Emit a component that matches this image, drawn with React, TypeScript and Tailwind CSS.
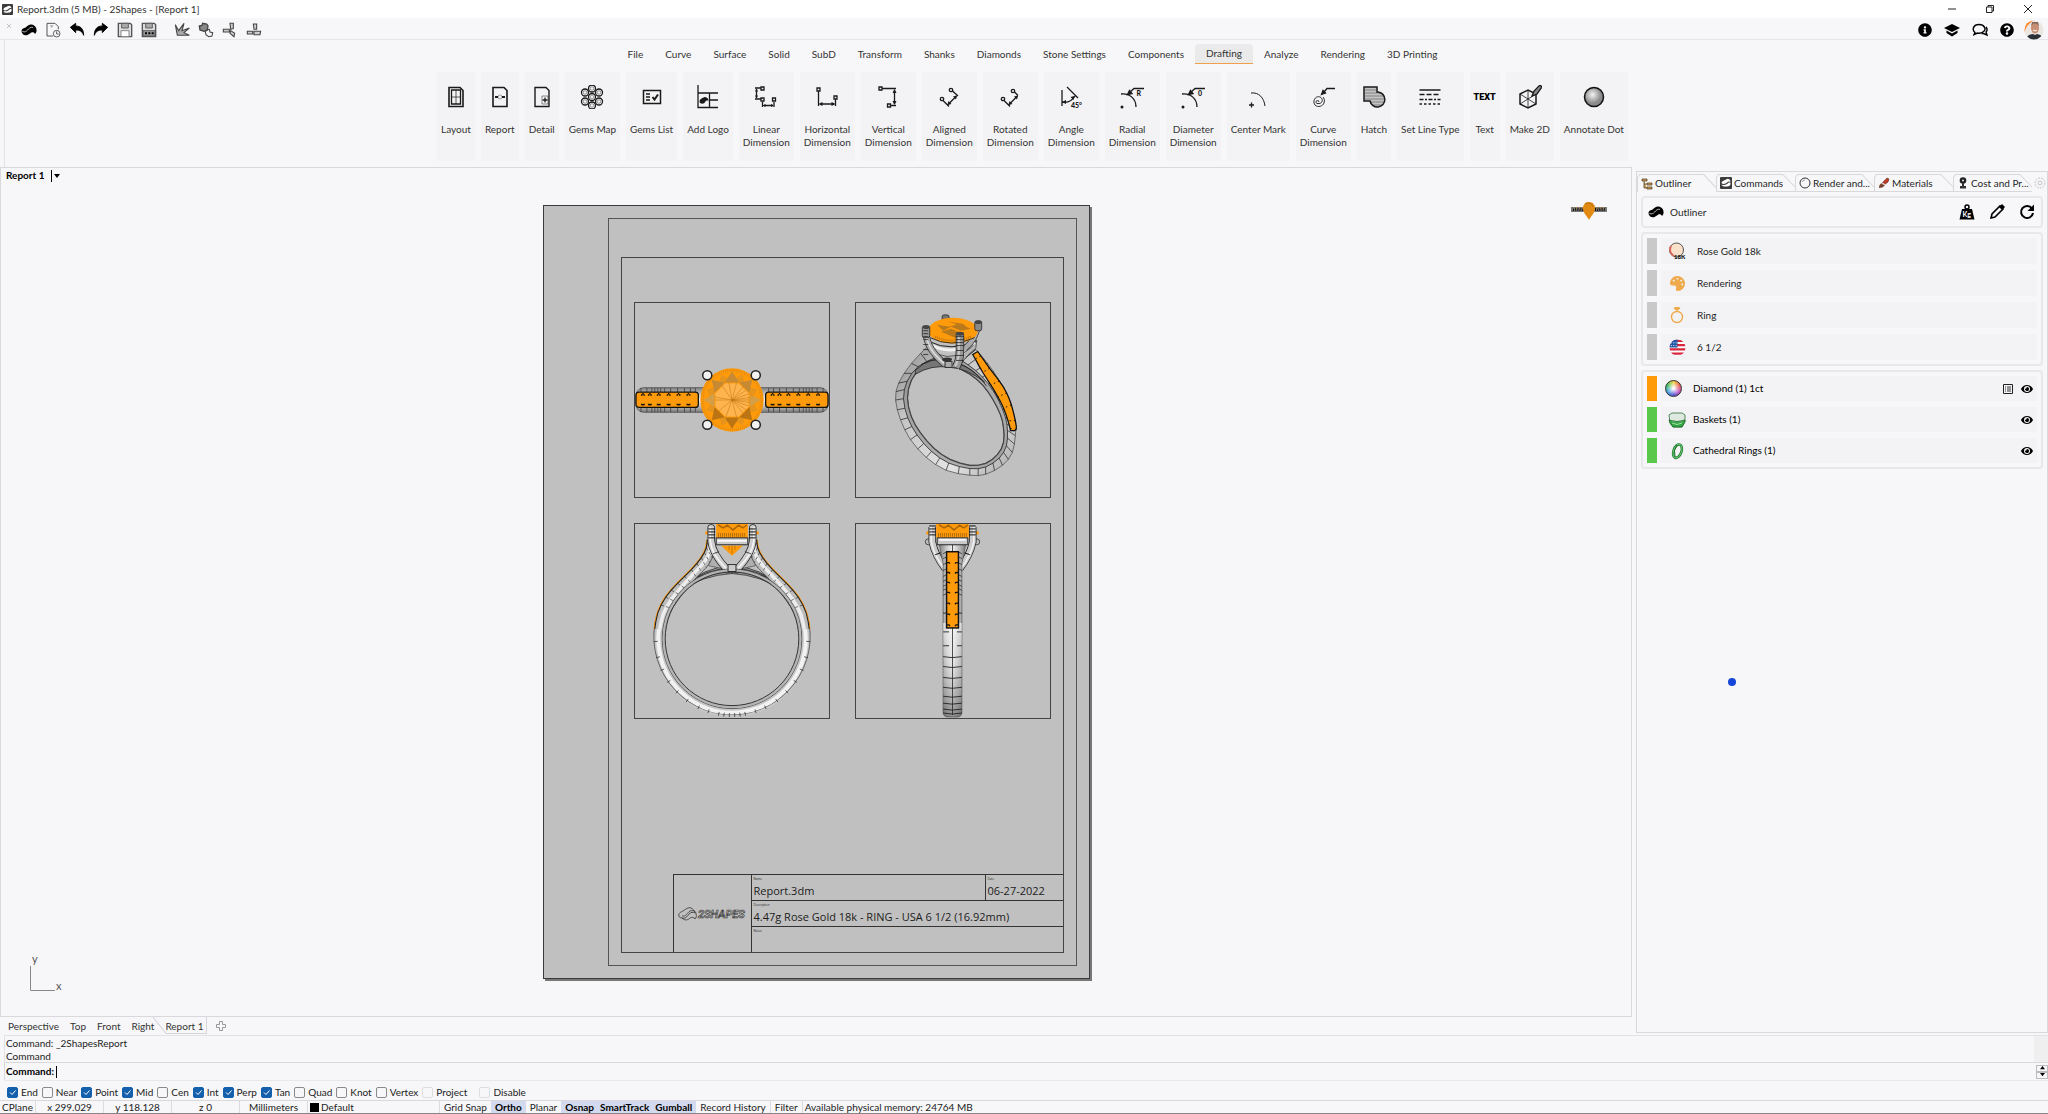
import { useState } from "react";
import type { ReactNode } from "react";
import { FaEye, FaInfoCircle, FaPalette, FaQuestionCircle } from "react-icons/fa";
import { clsx } from "clsx";

type Pt = [number, number];

const MENU_TABS = [
  "File",
  "Curve",
  "Surface",
  "Solid",
  "SubD",
  "Transform",
  "Shanks",
  "Diamonds",
  "Stone Settings",
  "Components",
  "Drafting",
  "Analyze",
  "Rendering",
  "3D Printing",
];

const OSNAPS = [
  { name: "End", on: true },
  { name: "Near", on: false },
  { name: "Point", on: true },
  { name: "Mid", on: true },
  { name: "Cen", on: false },
  { name: "Int", on: true },
  { name: "Perp", on: true },
  { name: "Tan", on: true },
  { name: "Quad", on: false },
  { name: "Knot", on: false },
  { name: "Vertex", on: false },
];

/* ---------- logos and small icons ---------- */

function Swoosh({ className = "", cut = "#f6f6f8" }: { className?: string; cut?: string }) {
  return (
    <svg viewBox="0 0 24 18" className={className} fill="currentColor">
      <path d="M1 12c-1-3 1-5 4-6 3-1 4-4 8-5 5-1 9 2 10 6-3-2-6-2-8 0-3 3-4 6-8 7-3 1-5 0-6-2z" />
      <path d="M23 7c1 3 0 6-2 8-1-3-4-3-6-2-3 2-5 4-8 4-3 0-5-2-6-5 3 2 6 1 8-1 3-3 4-6 8-6 3 0 5 0 6 2z" />
      <path d="M2 11c4 2 6 0 8-2s4-5 8-4" fill="none" stroke={cut} strokeWidth="1.1" />
    </svg>
  );
}

function AppBadge({ className = "" }: { className?: string }) {
  return (
    <svg viewBox="0 0 12 12" className={className}>
      <rect width="12" height="12" rx="1" fill="#3c3c3c" />
      <path d="M1.500 6C2 3.500 4 4 6 2.500S10 2 10.500 5C9 4 8 4.500 7 5.500S3 8 1.500 6zM10.500 6C11 9 8 9.500 5.500 9.500S2 9 1.500 7.500c2 1 4 .5 5.500-.5s2-2 3.500-1z" fill="#fff" />
    </svg>
  );
}

function Stroke({ children, className = "size-6" }: { children: ReactNode; className?: string }) {
  return (
    <svg viewBox="0 0 24 24" className={className} fill="none" stroke="#1a1a1a" strokeWidth="1.3">
      {children}
    </svg>
  );
}

const RIBBON: { label: string; icon: ReactNode }[] = [
  {
    label: "Layout",
    icon: (
      <Stroke>
        <path d="M5 2.500h11l3 3v16H5z" strokeWidth="1.600" />
        <path d="M7.500 5h9v14h-9z" />
        <path d="M12 5v14M7.500 12h9" strokeWidth=".7" />
      </Stroke>
    ),
  },
  {
    label: "Report",
    icon: (
      <Stroke>
        <path d="M5 2.500h11l3 3v16H5z" strokeWidth="1.600" />
        <path d="M7 12h3M14 12h3" strokeWidth="2" />
        <circle cx="12" cy="12" r="2" strokeWidth=".4" />
      </Stroke>
    ),
  },
  {
    label: "Detail",
    icon: (
      <Stroke>
        <path d="M5 2.500h11l3 3v16H5z" strokeWidth="1.400" />
        <path d="M12 11h6v8h-6z" strokeWidth=".5" />
        <path d="M12.500 15h5M15 12.500v5" />
      </Stroke>
    ),
  },
  {
    label: "Gems Map",
    icon: (
      <Stroke>
        {[
          [12, 3.5],
          [19, 7.5],
          [19, 16.5],
          [12, 20.5],
          [5, 16.5],
          [5, 7.5],
          [12, 12],
        ].map(([x, y], i) => (
          <g key={i}>
            <circle cx={x} cy={y} r="3.500" />
            <circle cx={x} cy={y} r="1.800" strokeWidth=".4" />
          </g>
        ))}
      </Stroke>
    ),
  },
  {
    label: "Gems List",
    icon: (
      <Stroke>
        <path d="M3.500 5.500h17v13h-17z" strokeWidth="1.500" />
        <path d="M6 9h4M6 12h4M6 15h4" />
        <path d="M12.500 12l2 2.500 3.500-5" strokeWidth="2" />
      </Stroke>
    ),
  },
  {
    label: "Add Logo",
    icon: (
      <Stroke>
        <path d="M2 0v22.500h20M2 8h20M13.500 8v14M13.500 15H22" />
        <path d="M3.500 17c0-3 3-4 5-5 2 0 4 1 4 4-2-1-3 0-4 2-2 1-4 1-5-1z" fill="#1a1a1a" stroke="none" />
      </Stroke>
    ),
  },
  {
    label: "Linear Dimension",
    icon: (
      <Stroke>
        <path d="M1 3h6M1 14h6M2.500 4v9M8.500 17v5M20 17v5M10 20.500h9" />
        <path d="M7 2h3v3H7zM7 13h3v3H7zM18.500 13h3v3h-3z" />
        <path d="M2.500 3.500L1 6.500h3zM2.500 13.500L1 10.500h3zM8.500 20.500l3-1.500v3zM20 20.500l-3-1.500v3z" fill="#1a1a1a" stroke="none" />
      </Stroke>
    ),
  },
  {
    label: "Horizontal Dimension",
    icon: (
      <Stroke>
        <path d="M3.500 6v15M20.500 14v7M5 19h14M2 3h3v3H2zM19 11h3v3h-3z" />
        <path d="M3.500 19l4-2v4zM20.500 19l-4-2v4z" fill="#1a1a1a" stroke="none" />
      </Stroke>
    ),
  },
  {
    label: "Vertical Dimension",
    icon: (
      <Stroke>
        <path d="M6 3.500h14M14 20.500h6M18.500 5v14M3 2h3v3H3zM11.500 19h3v3h-3z" />
        <path d="M18.500 4l-2 4h4zM18.500 20l-2-4h4z" fill="#1a1a1a" stroke="none" />
      </Stroke>
    ),
  },
  {
    label: "Aligned Dimension",
    icon: (
      <Stroke>
        <circle cx="14" cy="5" r="1.700" />
        <circle cx="5" cy="14" r="1.700" />
        <path d="M15.500 6l5.500 5M6 15.500l6 6M11 19.500l8.500-8.500" />
        <path d="M10.500 20l1-4 3 3zM20 10.500l-4 1 3 3z" fill="#1a1a1a" stroke="none" />
      </Stroke>
    ),
  },
  {
    label: "Rotated Dimension",
    icon: (
      <Stroke>
        <circle cx="15" cy="6" r="1.700" />
        <circle cx="5" cy="14" r="1.700" />
        <path d="M16.500 7l3.500 3.500M6 15.500l6 6M11 19.500l8.500-8.500" />
        <path d="M10.500 20l1-4 3 3zM20 10.500l-4 1 3 3z" fill="#1a1a1a" stroke="none" />
      </Stroke>
    ),
  },
  {
    label: "Angle Dimension",
    icon: (
      <Stroke>
        <path d="M3 5v16M8 2l11 11M3 17c5 1 10-1 13-6" />
        <path d="M3 17l4-2v4zM15.500 11l-4 1 3 3z" fill="#1a1a1a" stroke="none" />
        <text x="12" y="22.500" fontSize="7" fontWeight="900" fill="#1a1a1a" stroke="none">
          45°
        </text>
      </Stroke>
    ),
  },
  {
    label: "Radial Dimension",
    icon: (
      <Stroke>
        <path d="M1 9c9-1 15 5 15 13M9 8l5-4.500h10" />
        <path d="M7.500 9.500l2-4 2.500 3z" fill="#1a1a1a" />
        <circle cx="2" cy="22" r="1.500" fill="#1a1a1a" stroke="none" />
        <text x="16.500" y="11" fontSize="7" fontWeight="900" fill="#1a1a1a" stroke="none">
          R
        </text>
      </Stroke>
    ),
  },
  {
    label: "Diameter Dimension",
    icon: (
      <Stroke>
        <path d="M1 9c9-1 15 5 15 13M9 8l5-4.500h10" />
        <path d="M7.500 9.500l2-4 2.500 3z" fill="#1a1a1a" />
        <circle cx="2" cy="22" r="1.500" fill="#1a1a1a" stroke="none" />
        <text x="17" y="11" fontSize="7" fontWeight="900" fill="#1a1a1a" stroke="none">
          0
        </text>
      </Stroke>
    ),
  },
  {
    label: "Center Mark",
    icon: (
      <Stroke>
        <path d="M5 8c8-1 13 5 14 13" strokeWidth="1" />
        <path d="M3 20h5M5.500 17.500v5" />
      </Stroke>
    ),
  },
  {
    label: "Curve Dimension",
    icon: (
      <Stroke>
        <path d="M13 7l3-3.500h8" />
        <path d="M10.500 9.500l1.500-4 2.500 2.500z" fill="#1a1a1a" />
        <path
          d="M8 17a1.500 1.500 0 10-1 1.500c3 .5 5-2 4-4.500s-4-3-6-1.500-3 5-1 7.500c3 3 8 1 9-2s0-5-1-6"
          strokeWidth=".9"
        />
      </Stroke>
    ),
  },
  {
    label: "Hatch",
    icon: (
      <Stroke>
        <path d="M2 2h13v5h1a7.500 7.500 0 11-8 9H2z" fill="#c4c4c4" strokeWidth="1.500" />
        <path d="M3 5h11M3 8h16M3 11h19M3 14h20M9 17h13M10 20h11" strokeWidth=".4" />
      </Stroke>
    ),
  },
  {
    label: "Set Line Type",
    icon: (
      <Stroke>
        <path d="M1.500 5h21" strokeWidth="1.500" />
        <path d="M1.500 9.500h21" strokeDasharray="5 2" />
        <path d="M1.500 14.500h21" strokeDasharray="4 1.500 2 1.500" />
        <path d="M1.500 19h21" strokeDasharray="2.500 2" />
      </Stroke>
    ),
  },
  {
    label: "Text",
    icon: (
      <span className="flex h-6 items-center font-[Roboto,sans-serif] text-[9px] font-black text-black">TEXT</span>
    ),
  },
  {
    label: "Make 2D",
    icon: (
      <Stroke>
        <path d="M2 9l8-4 8 4v10l-8 4-8-4z" strokeWidth="1.500" />
        <path d="M10 5v18M2 9l16 10M18 9L2 19" strokeWidth=".8" />
        <path d="M14 11l2-5 6-6 2 2-5 7z" fill="#888" />
      </Stroke>
    ),
  },
  {
    label: "Annotate Dot",
    icon: (
      <svg viewBox="0 0 24 24" className="size-6">
        <defs>
          <radialGradient id="dot" cx=".42" cy=".38">
            <stop offset="0" stopColor="#f3f3f3" />
            <stop offset=".9" stopColor="#8b8b8b" />
          </radialGradient>
        </defs>
        <circle cx="12" cy="12" r="9.500" fill="url(#dot)" stroke="#111" strokeWidth="1.500" />
      </svg>
    ),
  },
];

const Doc = (
  <Stroke className="size-4">
    <path d="M3 2h12l5 5v4M3 2v19h9" stroke="#555" strokeWidth="1.500" />
    <path d="M7 5h6l-3 4z" fill="#aaa" stroke="none" />
    <circle cx="17.500" cy="17.500" r="5" stroke="#444" />
    <path d="M17.500 14v4h3" stroke="#444" />
  </Stroke>
);

const Undo = (
  <Stroke className="size-4">
    <path d="M2 8l8-6v4c8 0 12 5 12 14-2-6-6-8-12-8v4z" fill="#000" stroke="#000" />
  </Stroke>
);

const Redo = (
  <Stroke className="size-4">
    <path d="M22 8l-8-6v4C6 6 2 11 2 20c2-6 6-8 12-8v4z" fill="#000" stroke="#000" />
  </Stroke>
);

function Disk({ dots = false }: { dots?: boolean }) {
  return (
    <Stroke className="size-4">
      <path d="M2 2h18l2 2v18H2z" fill="#ddd" stroke="#555" strokeWidth="2" />
      <path d="M7 2h10v7H7z" fill="#aaa" stroke="#555" />
      {dots ? (
        <>
          <path d="M3 13h18v8H3z" fill="#999" stroke="#555" />
          <path d="M6 17h3M11 17h3M16 17h3" stroke="#000" strokeWidth="3" />
        </>
      ) : (
        <path d="M6 13h12v9H6z" fill="#fff" stroke="#777" />
      )}
    </Stroke>
  );
}

const TOOLS: { label: string; icon: ReactNode }[] = [
  { label: "2Shapes", icon: <Swoosh className="h-3 w-4 text-black" /> },
  { label: "New", icon: Doc },
  { label: "Undo", icon: Undo },
  { label: "Redo", icon: Redo },
  { label: "Save", icon: <Disk /> },
  { label: "Save as", icon: <Disk dots /> },
];

const EDIT_TOOLS: { label: string; icon: ReactNode }[] = [
  {
    label: "Sketch",
    icon: (
      <Stroke className="size-4">
        <path d="M2 4l5 9 8-11-3 11 11-4-8 7 8 4H5z" fill="#aaa" stroke="#444" strokeWidth="1.600" />
      </Stroke>
    ),
  },
  {
    label: "Group",
    icon: (
      <Stroke className="size-4">
        <path d="M2 6l4-1 1-3 6 1 2 3-1 6-5 2-6-2z" fill="#888" stroke="#444" strokeWidth="2" />
        <path d="M13 12l4-1 1 4 4 1-1 5-5 1-4-3-1-4z" stroke="#444" strokeWidth="1.600" />
      </Stroke>
    ),
  },
  {
    label: "Trim",
    icon: (
      <Stroke className="size-4">
        <path d="M12 2h5v8l-4 1zM2 11h9v4H2zM13 13l6 4-1 5-6-5z" fill="#ccc" stroke="#444" strokeWidth="1.600" />
      </Stroke>
    ),
  },
  {
    label: "Split",
    icon: (
      <Stroke className="size-4">
        <path d="M11 3h5v8h-4zM2 14h8v4H2zM12 14h10l-1 5h-9z" fill="#ccc" stroke="#444" strokeWidth="1.600" />
      </Stroke>
    ),
  },
];

/* ---------- ring drawings ---------- */

// Catmull-Rom sampling so outlines and their cross lines share the same points
function sample(pts: Pt[], steps = 5): Pt[] {
  const n = pts.length;
  const out: Pt[] = [];
  const at = (i: number) => pts[Math.max(0, Math.min(n - 1, i))];
  for (let i = 0; i < n - 1; i++) {
    const [a, b, c, d] = [at(i - 1), at(i), at(i + 1), at(i + 2)];
    for (let s = 0; s < steps; s++) {
      const t = s / steps;
      const f = (k: 0 | 1) =>
        0.5 *
        (2 * b[k] +
          (c[k] - a[k]) * t +
          (2 * a[k] - 5 * b[k] + 4 * c[k] - d[k]) * t * t +
          (3 * b[k] - a[k] - 3 * c[k] + d[k]) * t * t * t);
      out.push([f(0), f(1)]);
    }
  }
  out.push(pts[n - 1]);
  return out;
}

const toPath = (pts: Pt[], closed = false) => "M" + pts.map((p) => p.map((v) => v.toFixed(1)).join(" ")).join("L") + (closed ? "Z" : "");

const polar = (cx: number, cy: number, r: number, deg: number): Pt => [
  cx + r * Math.cos((deg * Math.PI) / 180),
  cy + r * Math.sin((deg * Math.PI) / 180),
];

const ORANGE = "#ff9a0a";

function Metal({ id, vertical = false }: { id: string; vertical?: boolean }) {
  return (
    <linearGradient id={id} x2={vertical ? "0" : "1"} y2={vertical ? "1" : "0"}>
      <stop offset="0" stopColor="#808080" />
      <stop offset=".3" stopColor="#cfcfcf" />
      <stop offset=".5" stopColor="#f2f2f2" />
      <stop offset=".75" stopColor="#bdbdbd" />
      <stop offset="1" stopColor="#777" />
    </linearGradient>
  );
}

function TopView() {
  const lines = [6, 12, 17, 20, 23, 26, 30, 36, 43, 50, 56, 61];
  return (
    <svg viewBox="0 0 196 196" className="block w-full">
      <defs>
        <Metal id="topMetal" vertical />
      </defs>
      <rect x="1" y="85.500" width="194" height="25" rx="8" fill="url(#topMetal)" stroke="#444" strokeWidth=".7" />
      {lines.map((x) => (
        <path key={x} d={`M${x} 86v24M${196 - x} 86v24`} stroke="#222" strokeWidth=".6" />
      ))}
      {[1, 132].map((x) => (
        <g key={x}>
          <rect x={x} y="90" width="63" height="15.500" rx="3" fill={ORANGE} stroke="#111" strokeWidth="1.300" />
          {[5, 12, 21, 31, 41, 51].map((d) => (
            <path
              key={d}
              d={`M${x + d} 93h4M${x + d + 2} 91v2M${x + d} 102.500h4M${x + d + 2} 102v2`}
              stroke="#111"
              strokeWidth="1.400"
              strokeDasharray="1.500 1"
            />
          ))}
        </g>
      ))}
      <circle cx="98" cy="98" r="32" fill={ORANGE} />
      <circle cx="98" cy="98" r="30" fill="none" stroke="#d98512" strokeWidth="3" strokeDasharray=".6 1.400" />
      {Array.from({ length: 8 }, (_, i) => i * 45).map((a) => (
        <g key={a}>
          <path
            d={toPath([polar(98, 98, 28, a + 22), polar(98, 98, 20, a + 2), polar(98, 98, 20, a + 42)], true)}
            fill="#e6941c"
          />
          <path
            d={toPath([polar(98, 98, 29, a), polar(98, 98, 19, a - 22), polar(98, 98, 19, a + 22)], true)}
            fill={a > 30 && a < 150 ? "#b06f14" : a % 180 ? "#bd873a" : "#d0a050"}
            opacity=".85"
          />
        </g>
      ))}
      <path d={toPath(Array.from({ length: 8 }, (_, i) => polar(98, 98, 18, i * 45 + 22)), true)} fill="#ffb44e" />
      {[-170, -125, -100, -75, -50, -35, -20, -8, 0, 8, 20, 35, 50, 75, 110, 140, 180].map((a) => (
        <path key={a} d={toPath([[98, 98], polar(98, 98, 18, a)])} stroke="#b9720f" strokeWidth=".5" />
      ))}
      {[
        [73, 73],
        [122, 73],
        [73, 123],
        [122, 123],
      ].map(([x, y], i) => (
        <circle key={i} cx={x} cy={y} r="4.600" fill="#f2f2f2" stroke="#222" strokeWidth="1.500" />
      ))}
    </svg>
  );
}

const OUTER: Pt[] = [
  [73, 43], [56, 61], [43, 81], [40, 98], [45, 118], [55, 138], [71, 156], [91, 169], [115, 174],
  [131, 173], [148, 164], [158, 151], [161, 134], [161, 121], [156, 101], [145, 79], [133, 61], [121, 47],
];

const INNER: Pt[] = [
  [82, 62], [66, 66], [56, 78], [52, 96], [56, 115], [65, 131], [79, 147], [95, 158], [115, 164],
  [131, 162], [143, 153], [149, 141], [149, 126], [146, 113], [138, 97], [128, 83], [115, 72], [100, 64],
];

const STRIP: Pt[][] = [
  [[123, 49], [135, 66], [149, 85], [157, 103], [162, 125], [160, 129]],
  [[118, 52], [128, 70], [140, 89], [149, 106], [155, 124], [156, 129]],
];

function PerspectiveView() {
  const outer = sample(OUTER, 2);
  const inner = sample(INNER, 2);
  const mid = outer.map((p, i): Pt => [(p[0] + 2 * inner[i][0]) / 3, (p[1] + 2 * inner[i][1]) / 3]);
  const a = sample(STRIP[0], 3);
  const b = sample(STRIP[1], 3);
  return (
    <svg viewBox="0 0 196 196" className="block w-full">
      <defs>
        <linearGradient id="perspMetal" x2="1" y2="1">
          <stop offset="0" stopColor="#8a8a8a" />
          <stop offset=".3" stopColor="#c4c4c4" />
          <stop offset=".7" stopColor="#e4e4e4" />
          <stop offset="1" stopColor="#a4a4a4" />
        </linearGradient>
      </defs>
      <path d={toPath([...outer, ...[...inner].reverse()], true)} fill="url(#perspMetal)" stroke="#555" strokeWidth=".8" />
      <path d={toPath([...mid, ...[...inner].reverse()], true)} fill="#8c8c8c" opacity=".6" />
      <path d={toPath(mid)} fill="none" stroke="#333" strokeWidth=".9" />
      <path d={toPath(inner)} fill="none" stroke="#444" strokeWidth="1.200" />
      {outer.map((p, i) => (
        <path key={i} d={toPath([p, mid[i]])} stroke="#1c1c1c" strokeWidth=".7" />
      ))}
      {/* gallery under the setting */}
      <path d="M60 68Q76 52 95 60Q112 60 130 80Q112 66 95 65Q76 62 60 72Z" fill="#777" stroke="#222" strokeWidth=".8" />
      <path d="M66 62Q82 54 92 57M100 60Q118 64 132 84" fill="none" stroke="#222" strokeWidth=".8" />
      <path d={toPath([...a, ...[...b].reverse()], true)} fill={ORANGE} stroke="#111" strokeWidth="1.300" />
      {a.map((p, i) => (i % 2 ? <path key={i} d={toPath([p, b[i]])} stroke="#111" strokeWidth="1" strokeDasharray="1.500 3" /> : null))}
      {/* basket */}
      <path d="M73 38Q76 52 92 54Q112 54 122 38L121 46Q112 52 104 65H90Q80 52 73 48Z" fill="#b5b5b5" stroke="#333" strokeWidth=".7" />
      <path d="M75 42Q96 54 120 40" stroke="#f1f1f1" strokeWidth="3" fill="none" />
      <path d="M74 39Q96 50 122 38" stroke="#222" strokeWidth="1" fill="none" />
      <path d="M71 30Q71 46 90 62" stroke="#333" strokeWidth="7" fill="none" />
      <path d="M71 30Q71 46 90 62" stroke="#a9a9a9" strokeWidth="5.500" fill="none" />
      <path d="M71 30Q71 46 89 61" stroke="#dedede" strokeWidth="1.500" fill="none" />
      <path d="M123 22Q122 36 110 46" stroke="#333" strokeWidth="6" fill="none" />
      <path d="M123 22Q122 36 110 46" stroke="#aaa" strokeWidth="4.500" fill="none" />
      <rect x="87" y="12" width="7" height="7" rx="2" fill="#777" stroke="#222" strokeWidth=".8" />
      <ellipse cx="98" cy="28" rx="25" ry="13" fill={ORANGE} />
      <path d="M82 22l12 2 10-3 12 5-10 2-10-4-8 4zM86 29l10-3 12 5-8 4zM94 19l14 2 6 5" fill="#a36f22" opacity=".75" />
      <path d="M80 34Q96 42 116 34" stroke="#b9720f" strokeWidth="2" strokeDasharray="1 1" fill="none" />
      <path d="M75 35Q96 46 120 35" stroke="#222" strokeWidth=".9" fill="none" />
      <rect x="67" y="23" width="7.500" height="12" rx="2" fill="#999" stroke="#222" strokeWidth=".8" />
      <ellipse cx="71" cy="24.500" rx="3.500" ry="1.800" fill="#444" />
      <rect x="120" y="18" width="7" height="10" rx="2" fill="#888" stroke="#222" strokeWidth=".8" />
      <ellipse cx="123.500" cy="19.500" rx="3.500" ry="1.800" fill="#444" />
      <path d="M105 32V48Q105 58 101 65" stroke="#222" strokeWidth="8.500" fill="none" />
      <path d="M105 32V48Q105 58 101 65" stroke="#999" strokeWidth="7" fill="none" />
      <path d="M104 34V48Q104 58 100 64" stroke="#ccc" strokeWidth="2" fill="none" />
      {[34, 37, 40, 43, 48, 53, 58].map((y) => (
        <path key={y} d={`M101 ${y}h8M68 ${y - 6}h5`} stroke="#222" strokeWidth=".8" />
      ))}
      <ellipse cx="105" cy="31" rx="4.300" ry="2" fill="#444" />
      <ellipse cx="92" cy="57" rx="5" ry="2" fill="#333" />
      <rect x="90" y="59" width="7" height="6" fill="#aaa" stroke="#222" strokeWidth=".8" />
    </svg>
  );
}

const SHOULDER_OUT: Pt[] = [[20, 106], [23, 90], [31, 74], [43, 60], [57, 46], [67, 34], [72, 24], [73, 16]];
const SHOULDER_IN: Pt[] = [[30, 106], [34, 92], [42, 79], [52, 66], [62, 54], [72, 44], [78, 34], [80, 22]];

function FrontView() {
  const out = sample(SHOULDER_OUT, 2);
  const inn = sample(SHOULDER_IN, 2);
  const core = out.map((p, i): Pt => [(p[0] + inn[i][0]) / 2, (p[1] + inn[i][1]) / 2]);
  const ticks = [-8, 2, 14, 24, 34, 44, 54, 64, 72, 80, 84, 88, 92, 96, 100, 108, 116, 126, 136, 146, 156, 166, 178, 188];
  const half = (
    <>
      <path d="M48 64Q68 44 98 42V50Q68 52 45 68Z" fill="#999" stroke="#222" strokeWidth=".7" />
      <path d="M52 60Q70 46 98 44.500M54 58Q72 48 98 47" fill="none" stroke="#222" strokeWidth=".8" />
      <path d="M80 30L92 46 74 42Z" fill="#b0b0b0" stroke="#333" strokeWidth=".6" />
      <path d={toPath(out)} stroke={ORANGE} strokeWidth="2.500" fill="none" />
      <path d={toPath([...out, ...[...inn].reverse()], true)} fill="#bdbdbd" />
      <path d={toPath(core)} stroke="#ededed" strokeWidth="3.500" fill="none" />
      <path d={toPath(inn)} stroke="#444" strokeWidth=".7" fill="none" />
      <path d={toPath(out)} stroke="#222" strokeWidth="1.100" fill="none" />
      {out.map((p, i) =>
        i > 2 ? <path key={i} d={toPath([p, inn[i]])} stroke="#222" strokeWidth=".6" strokeDasharray="3 2" /> : null
      )}
      <path d="M71 9h6" stroke={ORANGE} strokeWidth="3" />
      <path d="M77 4V17Q78 30 93 46" stroke="#222" strokeWidth="7.500" fill="none" strokeLinecap="round" />
      <path d="M77 4V17Q78 30 93 46" stroke="#cfcfcf" strokeWidth="6" fill="none" strokeLinecap="round" />
      <path d="M76 3V17Q77 30 92 45" stroke="#f4f4f4" strokeWidth="1.500" fill="none" />
      <path d="M74 5h7M74 8h7M74 11h7M74 14h7" stroke="#111" strokeWidth="1" />
      <path d="M79 30l6-2" stroke="#222" strokeWidth=".8" />
    </>
  );
  return (
    <svg viewBox="0 0 196 196" className="block w-full">
      <circle cx="98" cy="116" r="74" fill="none" stroke="#c6c6c6" strokeWidth="10" strokeDasharray="240 225" transform="rotate(-3 98 116)" />
      <path d="M22 92A79 79 0 1 0 174 92" fill="none" stroke="#555" strokeWidth=".9" />
      <circle cx="98" cy="116" r="74.500" fill="none" stroke="#f2f2f2" strokeWidth="4" strokeDasharray="255 213" transform="rotate(-8 98 116)" />
      {ticks.map((t) => (
        <path key={t} d={toPath([polar(98, 116, 75, t), polar(98, 116, 79, t)])} stroke="#222" strokeWidth=".7" />
      ))}
      {half}
      <g transform="matrix(-1 0 0 1 196 0)">{half}</g>
      <circle cx="98" cy="116" r="70.500" fill="none" stroke="#444" strokeWidth=".8" />
      <circle cx="98" cy="116" r="69" fill="none" stroke="#b4b4b4" strokeWidth="2" />
      <circle cx="98" cy="116" r="67.500" fill="none" stroke="#333" strokeWidth="1" />
      <rect x="94" y="41" width="8" height="7" fill="#ccc" stroke="#222" strokeWidth=".9" />
      <path d="M82 0h32v14H82z" fill={ORANGE} />
      <path d="M84 1l5 3 5-3M93 1l6 5 6-5M104 1l5 3 4-3" fill="none" stroke="#a8660a" strokeWidth="1.500" />
      <path d="M84 11h28" stroke="#a8660a" strokeWidth="4" strokeDasharray=".8 1.200" />
      <path d="M82 14h32v7H82z" fill="#c9c9c9" stroke="#222" strokeWidth="1" />
      <path d="M83 17h30" stroke="#f8f8f8" strokeWidth="2" />
      <path d="M87 22h22L98 32z" fill={ORANGE} />
      <path d="M98 22v8M95 22v4M101 22v4" stroke="#a8660a" strokeWidth=".7" />
    </svg>
  );
}

function SideView() {
  const rungs = [90, 109, 123, 134, 144, 155, 165, 174, 181, 187, 191];
  const half = (
    <>
      <circle cx="73" cy="18" r="3" fill="#bbb" stroke="#333" strokeWidth=".8" />
      <path d="M71 9h6" stroke={ORANGE} strokeWidth="3" />
      <path d="M77 3V18Q80 32 90 45" stroke="#222" strokeWidth="7.500" fill="none" />
      <path d="M77 3V18Q80 32 90 45" stroke="#ccc" strokeWidth="6" fill="none" />
      <path d="M76 3V18Q79 32 89 45" stroke="#f2f2f2" strokeWidth="1.500" fill="none" />
      <path d="M74 2h7M74 5h7M74 8h7M74 11h7M80 31l6-2" stroke="#111" strokeWidth="1" />
    </>
  );
  return (
    <svg viewBox="0 0 196 196" className="block w-full">
      <defs>
        <Metal id="sideMetal" />
        <linearGradient id="sideShade" x2="0" y2="1">
          <stop offset="0" stopColor="#fff" stopOpacity=".6" />
          <stop offset=".4" stopColor="#ddd" stopOpacity=".3" />
          <stop offset="1" stopColor="#333" stopOpacity=".5" />
        </linearGradient>
      </defs>
      {half}
      <g transform="matrix(-1 0 0 1 195 0)">{half}</g>
      <path d="M84 20h27L107 40V190Q107 195 102 195H93Q88 195 88 190V40Z" fill="url(#sideMetal)" stroke="#555" strokeWidth=".7" />
      <path d="M88 100h19v90q0 5-5 5h-9q-5 0-5-5z" fill="url(#sideShade)" />
      {rungs.map((y, i) => (
        <path key={y} d={i < 3 ? `M88 ${y}h6M102 ${y}h5` : `M88 ${y}q9 2 19 0`} stroke="#222" strokeWidth=".9" fill="none" />
      ))}
      {[30, 35, 41, 47, 53, 58, 63, 67, 72].map((y) => (
        <path key={y} d={`M88 ${y}l4-2M107 ${y}l-4-2`} stroke="#222" strokeWidth=".7" />
      ))}
      <path d="M97.500 18v175" stroke="#222" strokeWidth=".8" />
      <rect x="91.500" y="28" width="12" height="77" fill={ORANGE} stroke="#111" strokeWidth="1.500" />
      {[39, 49, 59, 69, 80, 91, 102].map((y) => (
        <path key={y} d={`M92 ${y}h2l1 1M103 ${y}h-2l-1 1`} stroke="#111" strokeWidth="1.300" fill="none" />
      ))}
      <path d="M81 0h33v14H81z" fill={ORANGE} />
      <path d="M84 1l5 3 5-3M93 1l6 5 6-5M104 1l5 3 4-3" fill="none" stroke="#a8660a" strokeWidth="1.500" />
      <path d="M83 11h29" stroke="#a8660a" strokeWidth="4" strokeDasharray=".8 1.200" />
      <path d="M82 14h31v7H82z" fill="#c9c9c9" stroke="#222" strokeWidth="1" />
      <path d="M84 16h27" stroke="#f8f8f8" strokeWidth="2" />
    </svg>
  );
}

function SheetLogo() {
  return (
    <svg viewBox="0 0 68 14" className="w-[68px]" fill="none" stroke="#333" strokeWidth=".8">
      <path d="M1 9c-1-3 2-4 4-5 3-2 5-4 8-3 2 1 4 3 4 5-2-1-4-1-6 1-2 3-4 5-7 4-2 0-3-1-3-2z" />
      <path d="M4 9c4 1 5-3 8-5 3-1 6 0 6 3 1 2 0 4-1 5-1-2-3-2-5-1-2 2-5 3-8 0" />
      <text x="20" y="11" fontSize="11" fontWeight="600" fontStyle="italic" fontFamily="Roboto, sans-serif" strokeWidth=".6">
        2SHAPES
      </text>
    </svg>
  );
}

/* ---------- layout sheet ---------- */

function TitleField({ caption, value, className = "" }: { caption: string; value?: string; className?: string }) {
  return (
    <div className={clsx("px-0.5 text-[#1c1c1c]", className)}>
      <div className="pt-0.5 text-[3px] leading-[5px]">{caption}</div>
      <div className="h-[18px] text-[11px] leading-[18px] whitespace-nowrap">{value}</div>
    </div>
  );
}

function Sheet() {
  return (
    <div className="w-[547px] border border-[#3a3a3a] bg-[#c0c0c0] pt-3 pr-3 pb-3 pl-16 font-['Open_Sans',sans-serif] shadow-[2px_2px_0_#777]">
      <div className="border border-[#555] px-3 pt-[38px] pb-3">
        <div className="border border-[#444] pt-11 pl-3">
          <div className="grid grid-cols-2 gap-[25px] pr-3">
            {[TopView, PerspectiveView, FrontView, SideView].map((View, i) => (
              <div key={i} className="border border-[#444]">
                <View />
              </div>
            ))}
          </div>
          <div className="mt-[155px] ml-[39px] flex border-t border-l border-[#333]">
            <div className="flex w-[78px] items-center justify-center border-r border-[#333]">
              <SheetLogo />
            </div>
            <div className="flex-1">
              <div className="flex">
                <TitleField caption="Name" value="Report.3dm" className="flex-1 border-b border-[#333]" />
                <TitleField caption="Date" value="06-27-2022" className="w-[78px] border-b border-l border-[#333]" />
              </div>
              <TitleField
                caption="Description"
                value="4.47g Rose Gold 18k - RING - USA 6 1/2 (16.92mm)"
                className="border-b border-[#333]"
              />
              <TitleField caption="Notes" />
            </div>
          </div>
        </div>
      </div>
    </div>
  );
}

function Viewport() {
  return (
    <main className="relative flex flex-1 flex-col border border-[#d9d9dc]">
      <div className="absolute top-0 left-0 flex h-[15px] items-center gap-1 pl-[5px]">
        <span className="text-[10px] font-bold text-black">Report 1</span>
        <button aria-label="Viewport menu" className="ml-0.5 flex h-3 items-center border-l border-black pl-0.5">
          <svg viewBox="0 0 6 4" className="w-1.5">
            <path d="M0 0h6L3 4z" />
          </svg>
        </button>
      </div>
      <div className="flex flex-1 items-center justify-center">
        <Sheet />
      </div>
      <svg viewBox="0 0 36 22" className="absolute top-8 right-6 w-9">
        <path d="M0 7h36v5H0z" fill="#777" />
        <path d="M2 9.500h32" stroke="#111" strokeWidth="3" strokeDasharray="1 1.200" />
        <path d="M2 8h32" stroke="#d88a20" strokeWidth="1" strokeDasharray="1 2" />
        <path d="M18 2c4 0 6 3 6 6 0 5-4 8-6 12-2-4-6-7-6-12 0-3 2-6 6-6z" fill="#e08a14" />
        <path d="M14 4c2-2 7-1 8 3" stroke="#b76a08" fill="none" />
      </svg>
      <svg viewBox="0 0 40 46" className="absolute bottom-[22px] left-6 w-10 text-[11px]" fill="#555">
        <path d="M5.500 18v24.500H30" stroke="#888" fill="none" />
        <text x="7" y="15">
          y
        </text>
        <text x="31" y="42">
          x
        </text>
      </svg>
    </main>
  );
}

/* ---------- right panel ---------- */

const PANEL_TABS: { label: string; icon: ReactNode }[] = [
  {
    label: "Outliner",
    icon: (
      <svg viewBox="0 0 12 12" className="size-3" fill="#c8a060" stroke="#5b4520" strokeWidth=".8">
        <path d="M1 1h5v2H1zM6 5h5v2H6zM6 9h5v2H6zM3 3v7h3M3 6h3" />
      </svg>
    ),
  },
  { label: "Commands", icon: <AppBadge className="size-3" /> },
  {
    label: "Render and...",
    icon: (
      <svg viewBox="0 0 12 12" className="size-3" fill="none" stroke="#333">
        <circle cx="6" cy="6" r="5" />
        <path d="M3 5q1-2 3-2" stroke="#999" />
      </svg>
    ),
  },
  {
    label: "Materials",
    icon: (
      <svg viewBox="0 0 12 12" className="size-3">
        <path d="M1 11c0-3 1-4 3-5l3 2c-1 2-3 3-6 3z" fill="#7a4630" />
        <path d="M4 6l5-5 2 1-1 3-4 3z" fill="#c43c28" stroke="#5a2a20" strokeWidth=".6" />
        <path d="M4 6l3 2" stroke="#ddd" strokeWidth="1.500" />
      </svg>
    ),
  },
  {
    label: "Cost and Pr...",
    icon: (
      <svg viewBox="0 0 12 12" className="size-3">
        <circle cx="6" cy="3.500" r="3.300" fill="#222" />
        <circle cx="6" cy="3.500" r="1" fill="#ddd" />
        <path d="M5 6h2v3h2v2.500H3V9h2z" fill="#333" />
      </svg>
    ),
  },
];

const RoseGold = (
  <svg viewBox="0 0 18 18" className="size-[18px]">
    <circle cx="8.500" cy="8" r="7" fill="#f9e0c8" stroke="#555" />
    <path d="M3 4q-3 6 3 10" stroke="#d86a60" strokeWidth="2" fill="none" />
    <text x="6" y="16.500" fontSize="6" fontWeight="800" fill="#222">
      18K
    </text>
  </svg>
);

const RingIcon = (
  <svg viewBox="0 0 18 18" className="size-[18px]" fill="none" stroke="#efaa4c" strokeWidth="1.400">
    <circle cx="9" cy="11" r="5.500" />
    <path d="M7 1h4l1.500 1.500L9 5 5.500 2.500z" fill="#efaa4c" stroke="none" />
  </svg>
);

const Flag = (
  <svg viewBox="0 0 18 18" className="size-[17px]">
    <clipPath id="flagClip">
      <circle cx="9" cy="9" r="8.500" />
    </clipPath>
    <g clipPath="url(#flagClip)">
      <path d="M0 0h18v18H0z" fill="#fff" />
      <path d="M0 2h18M0 6.500h18M0 11h18M0 15.500h18" stroke="#d9263c" strokeWidth="2.200" />
      <path d="M0 0h9v9H0z" fill="#2457a8" />
      <path d="M2 4h6M2 7h6" stroke="#fff" strokeDasharray="1 1.500" />
    </g>
  </svg>
);

const PROPERTIES = [
  { label: "Rose Gold 18k", icon: RoseGold },
  { label: "Rendering", icon: <FaPalette className="size-[15px] -scale-x-100 text-[#efaa4c]" /> },
  { label: "Ring", icon: RingIcon },
  { label: "6 1/2", icon: Flag },
];

const GemBall = (
  <span className="mr-2 size-[17px] rounded-full border border-[#333] bg-[radial-gradient(circle,#fff_5%,transparent_65%),conic-gradient(#e8d040,#e86050,#c050c0,#5050d0,#40a0e0,#40c060,#e8d040)]" />
);

const Basket = (
  <svg viewBox="0 0 18 18" className="size-[18px]" stroke="#155c20" strokeWidth=".7">
    <path d="M1 4l3-2h10l3 2v6l-3 6H5L2 12z" fill="#dfe9e0" />
    <path d="M1 9q8 3 16 0v2l-3 5H5L2 12z" fill="#35a845" />
    <path d="M4 12q5 3 10 0" stroke="#c9f0cc" fill="none" />
  </svg>
);

const Cathedral = (
  <svg viewBox="0 0 18 18" className="size-[18px]" fill="none">
    <ellipse cx="9.500" cy="9" rx="4" ry="7" transform="rotate(20 9 9)" stroke="#1c6e28" strokeWidth="2.500" />
    <ellipse cx="9.500" cy="9" rx="4" ry="7" transform="rotate(20 9 9)" stroke="#5cc46a" strokeWidth="1.200" />
    <path d="M9 3q-4 5-2 12" stroke="#1c6e28" />
  </svg>
);

const OBJECTS = [
  { label: "Diamond (1) 1ct", icon: GemBall, color: "bg-[#ff9a0a]", list: true },
  { label: "Baskets (1)", icon: Basket, color: "bg-[#5ac84b]", list: false },
  { label: "Cathedral Rings (1)", icon: Cathedral, color: "bg-[#5ac84b]", list: false },
];

function Card({ children, className = "" }: { children: ReactNode; className?: string }) {
  return <section className={clsx("rounded border-2 border-[#e8e8eb] bg-[#f7f7f9]", className)}>{children}</section>;
}

function SidePanel() {
  const [active, setActive] = useState("Outliner");
  return (
    <aside className="relative mt-1 -mb-4 w-[412px] shrink-0 border border-[#d9d9dc] text-[#1f1f1f]">
      <div className="flex h-5 items-stretch pt-0.5 text-[10px]">
        {PANEL_TABS.map((tab) => (
          <button
            key={tab.label}
            onClick={() => setActive(tab.label)}
            className={clsx(
              "relative flex min-w-0 flex-1 items-center gap-0.5 pt-px pl-1 text-left whitespace-nowrap",
              active !== tab.label && "border-b border-[#d9d9dc]"
            )}
          >
            <svg viewBox="0 0 78 17" preserveAspectRatio="none" className="absolute inset-0 size-full" fill="none" stroke="#d9d9dc">
              <path d="M.5 17V3.500l2-3H66L78 13" />
            </svg>
            {tab.icon}
            <span>{tab.label}</span>
          </button>
        ))}
        <button aria-label="Panel options" className="flex w-[15px] items-center justify-center">
          <svg viewBox="0 0 12 12" className="size-3" fill="none" stroke="#c4c4c8">
            <circle cx="6" cy="6" r="5" strokeDasharray="2 1" />
            <circle cx="6" cy="6" r="2" />
          </svg>
        </button>
      </div>

      <div className="flex flex-col gap-1 px-1 pt-1 text-[10px]">
        <Card className="flex h-8 items-center pr-1.5 pl-1">
          <Swoosh className="h-3 w-[18px] text-black" />
          <h2 className="ml-[5px] flex-1">Outliner</h2>
          <div className="flex items-center gap-3.5 text-black">
            <button aria-label="Weight">
              <svg viewBox="0 0 16 16" className="size-4">
                <circle cx="8" cy="3" r="2" fill="none" stroke="#000" strokeWidth="1.500" />
                <path d="M3 5h10l2.500 10.500H.5z" />
                <text x="3.500" y="13" fontSize="7" fontWeight="700" fill="#fff">
                  Kg
                </text>
              </svg>
            </button>
            <button aria-label="Edit">
              <svg viewBox="0 0 16 16" className="size-4">
                <path d="M2 14l1-4 8-8 3 3-8 8z" fill="none" stroke="#000" strokeWidth="1.600" />
                <path d="M10 3l3-3 3 3-3 3z" />
              </svg>
            </button>
            <button aria-label="Refresh">
              <svg viewBox="0 0 16 16" className="size-4" fill="none" stroke="#000" strokeWidth="2">
                <path d="M13 4.500A6 6 0 1014 9" />
                <path d="M15 .5V7H8.500z" fill="#000" stroke="none" />
              </svg>
            </button>
          </div>
        </Card>

        <Card className="flex flex-col gap-1.5 p-1">
          {PROPERTIES.map((row) => (
            <div key={row.label} className="flex h-[26px] items-center gap-1">
              <span className="h-full w-2.5 bg-[#c9c9c9]" />
              <div className="flex h-full flex-1 items-center bg-[#f3f3f5]">
                <span className="flex w-8 justify-center">{row.icon}</span>
                <span className="ml-1">{row.label}</span>
              </div>
            </div>
          ))}
        </Card>

        <Card className="flex flex-col gap-1.5 p-1">
          {OBJECTS.map((row) => (
            <div key={row.label} className="flex h-[25px] items-center gap-1">
              <span className={clsx("h-full w-2.5", row.color)} />
              <div className="flex h-full flex-1 items-center bg-[#f3f3f5] pr-1 text-black">
                <span className="flex w-8 justify-center">{row.icon}</span>
                <span className="flex-1">{row.label}</span>
                {row.list && (
                  <button aria-label="Gem list" className="mr-2">
                    <svg viewBox="0 0 10 10" className="size-2.5" fill="none" stroke="#222">
                      <path d="M.5.5h9v9h-9z" />
                      <path d="M2 3h1M4 3h4M2 5h1M4 5h4M2 7h1M4 7h4" strokeWidth=".9" />
                    </svg>
                  </button>
                )}
                <button aria-label={`Toggle ${row.label}`}>
                  <FaEye className="size-3" />
                </button>
              </div>
            </div>
          ))}
        </Card>
      </div>
      <span className="absolute top-[506px] left-[91px] size-2 rounded-full bg-[#1546d8]" />
    </aside>
  );
}

/* ---------- bottom bars ---------- */

function ViewTabs() {
  return (
    <nav className="mr-[416px] flex h-[18px] items-center pl-2 text-[10px] text-[#333]">
      {["Perspective", "Top", "Front", "Right"].map((name) => (
        <button key={name} className="mr-[11px]">
          {name}
        </button>
      ))}
      <button className="relative -ml-3 h-full pr-1 pl-3">
        <svg viewBox="0 0 54 18" preserveAspectRatio="none" className="absolute inset-0 size-full" fill="none" stroke="#d4d4d8">
          <path d="M0 0l13 16.500h40.500V0" />
        </svg>
        Report 1
      </button>
      <button aria-label="Add view" className="ml-2">
        <svg viewBox="0 0 12 12" className="size-3" fill="none" stroke="#999">
          <path d="M4.500 4.500v-3h3v3h3v3h-3v3h-3v-3h-3v-3z" />
        </svg>
      </button>
    </nav>
  );
}

function Osnap({ name, on, faint = false }: { name: string; on: boolean; faint?: boolean }) {
  return (
    <label className="relative flex items-center gap-[3px]">
      <input
        type="checkbox"
        defaultChecked={on}
        className={clsx(
          "peer size-[11px] appearance-none rounded-xs border checked:border-[#1560ac] checked:bg-[#1560ac]",
          faint ? "border-[#dedee0]" : "border-[#8a8a8a]"
        )}
      />
      <svg viewBox="0 0 11 11" className="pointer-events-none absolute left-0 hidden size-[11px] peer-checked:block">
        <path d="M3 5.500l2 2 3.500-4" fill="none" stroke="#fff" />
      </svg>
      {name}
    </label>
  );
}

function Footer() {
  return (
    <footer className="flex flex-col border-b border-[#858585] text-[10px] text-[#222]">
      <div className="relative ml-1 h-[27px] border-t border-l border-[#e2e2e5] pt-px pl-px leading-[13px]">
        <p>Command: _2ShapesReport</p>
        <p>Command</p>
        <span className="absolute top-0 right-0 h-full w-[14px] bg-[#efefef]" />
      </div>
      <div className="ml-1 flex h-[18px] items-center border-t border-l border-[#d9d9dc] pl-px">
        <label htmlFor="command" className="font-bold text-black">
          Command:
        </label>
        <span className="ml-0.5 h-3 w-px bg-black" />
        <input id="command" className="h-3 flex-1 outline-none" />
        <div className="flex flex-col">
          <button aria-label="Previous" className="flex h-[7px] w-3 items-center justify-center border border-[#bbb]">
            <svg viewBox="0 0 6 4" className="w-[5px]">
              <path d="M0 4h6L3 0z" />
            </svg>
          </button>
          <button aria-label="Next" className="flex h-[7px] w-3 items-center justify-center border border-[#bbb]">
            <svg viewBox="0 0 6 4" className="w-[5px]">
              <path d="M0 0h6L3 4z" />
            </svg>
          </button>
        </div>
      </div>
      <div className="ml-1 flex h-5 items-center gap-1 border-t border-[#e8e8ea] pt-[3px] pl-[3px]">
        {OSNAPS.map((o) => (
          <Osnap key={o.name} {...o} />
        ))}
        <Osnap name="Project" on={false} faint />
        <div className="ml-2">
          <Osnap name="Disable" on={false} faint />
        </div>
      </div>
      <div className="flex h-[13px] items-center border-t border-[#d9d9dc] leading-3 whitespace-nowrap *:h-full">
        <span className="w-9 border-r border-[#dcdcdf] text-center">CPlane</span>
        <span className="w-17 border-r border-[#dcdcdf] text-center">x 299.029</span>
        <span className="w-17 border-r border-[#dcdcdf] text-center">y 118.128</span>
        <span className="w-17 border-r border-[#dcdcdf] text-center">z 0</span>
        <span className="w-17 border-r border-[#dcdcdf] text-center">Millimeters</span>
        <span className="flex w-33 items-center gap-0.5 border-r border-[#dcdcdf] pl-0.5">
          <i className="size-[9px] bg-black" />
          Default
        </span>
        <button className="px-1">Grid Snap</button>
        <button className="bg-[#d3d9ee] px-1 font-bold text-black">Ortho</button>
        <button className="px-1">Planar</button>
        <button className="bg-[#d3d9ee] pr-[3px] pl-1 font-bold text-black">Osnap</button>
        <button className="bg-[#d3d9ee] px-[3px] font-bold text-black">SmartTrack</button>
        <button className="bg-[#d3d9ee] pr-1 pl-[3px] font-bold text-black">Gumball</button>
        <button className="px-1">Record History</button>
        <button className="border-x border-[#dcdcdf] px-1">Filter</button>
        <span className="pl-0.5">Available physical memory: 24764 MB</span>
      </div>
    </footer>
  );
}

/* ---------- header ---------- */

function Header() {
  const [tab, setTab] = useState("Drafting");
  return (
    <header>
      <div className="flex h-[18px] items-center bg-white pr-[15px] pl-0.5">
        <AppBadge className="size-[11px]" />
        <h1 className="ml-1 flex-1 text-[10px] text-[#333]">Report.3dm (5 MB) - 2Shapes - [Report 1]</h1>
        <div className="flex items-center gap-7 text-[#222]">
          <button aria-label="Minimize">
            <svg viewBox="0 0 10 10" className="size-2.5" stroke="currentColor">
              <path d="M1 5h8" />
            </svg>
          </button>
          <button aria-label="Restore">
            <svg viewBox="0 0 10 10" className="size-2.5" fill="none" stroke="currentColor">
              <path d="M1.500 3h5.500v5.500h-5.500zM3 3V1.500h5.500V7H7" />
            </svg>
          </button>
          <button aria-label="Close">
            <svg viewBox="0 0 10 10" className="size-2.5" stroke="currentColor">
              <path d="M1 1l8 8M9 1L1 9" />
            </svg>
          </button>
        </div>
      </div>

      <div className="flex h-[22px] items-center border-b border-[#e6e6e8] pt-0.5 pr-1 pl-[5px]">
        <svg viewBox="0 0 6 6" className="mb-2 h-1.5 w-2" stroke="#c4c4c4">
          <path d="M1 1l4 4M5 1L1 5" />
        </svg>
        <div className="ml-2 flex flex-1 items-center gap-2">
          {TOOLS.map((t) => (
            <button key={t.label} aria-label={t.label}>
              {t.icon}
            </button>
          ))}
          <span className="w-px" />
          {EDIT_TOOLS.map((t) => (
            <button key={t.label} aria-label={t.label}>
              {t.icon}
            </button>
          ))}
        </div>
        <div className="flex items-center gap-3 text-[14px] text-black">
          <button aria-label="About">
            <FaInfoCircle />
          </button>
          <button aria-label="Learn">
            <svg viewBox="0 0 16 14" className="w-4">
              <path d="M8 1l8 4-8 4-8-4z" />
              <path d="M2.500 7.500L8 10.500l5.500-3V10L8 13.500 2.500 10z" />
            </svg>
          </button>
          <button aria-label="Chat">
            <svg viewBox="0 0 16 14" className="w-4" fill="none" stroke="#000" strokeWidth="1.400">
              <path d="M3 9.500C-.5 6.500 1.500 1.500 7 1.500s8 5 4 7.500c-1.500 1-4 1.500-5.500 1L2 11.500z" />
              <path d="M14 4c1.500 2 1 4 0 5l1 3-3.500-1.500H9.500" />
            </svg>
          </button>
          <button aria-label="Help">
            <FaQuestionCircle />
          </button>
          <svg viewBox="0 0 20 20" className="-ml-0.5 size-5">
            <clipPath id="face">
              <circle cx="10" cy="10" r="9.500" />
            </clipPath>
            <g clipPath="url(#face)">
              <path d="M0 0h20v20H0z" fill="#ece6e2" />
              <path d="M0 14Q2 4 10 0H0z" fill="#ff7a14" />
              <ellipse cx="11" cy="8" rx="4" ry="5.500" fill="#c98f76" />
              <path d="M7 6q4-5 8 0l-1-4H8z" fill="#8a6a5c" />
              <path d="M2 20q1-6 7-6l2 1 2-1q6 1 6 6z" fill="#2b3038" />
              <path d="M9 10q2 2 4 0" stroke="#fff" fill="none" />
            </g>
          </svg>
        </div>
      </div>

      <div className="ml-1 flex flex-col items-center border-l border-[#e2e2e5] pt-1 pb-1.5 pl-3 text-[10px] text-[#333]">
        <nav className="flex h-5">
          {MENU_TABS.map((name) => (
            <button
              key={name}
              onClick={() => setTab(name)}
              className={clsx("rounded-t px-[11px]", tab === name && "border-b border-[#f0a04a] bg-[#eaeaea]")}
            >
              {name}
            </button>
          ))}
        </nav>
        <div className="mt-2 flex gap-1.5">
          {RIBBON.map((item) => {
            const twoLines = item.label.endsWith(" Dimension");
            return (
              <button
                key={item.label}
                className="flex h-[89px] flex-col items-center bg-[#f3f3f5] px-1 pt-[13px] leading-[13px]"
              >
                {item.icon}
                <span className="mt-[14px]">{twoLines ? item.label.replace(" Dimension", "") : item.label}</span>
                {twoLines && <span>Dimension</span>}
              </button>
            );
          })}
        </div>
      </div>
    </header>
  );
}

export default function App() {
  return (
    <div className="flex min-h-screen flex-col bg-[#f7f7f9] font-[Lato,sans-serif]">
      <Header />
      <div className="flex flex-1 gap-1">
        <Viewport />
        <SidePanel />
      </div>
      <ViewTabs />
      <Footer />
    </div>
  );
}
